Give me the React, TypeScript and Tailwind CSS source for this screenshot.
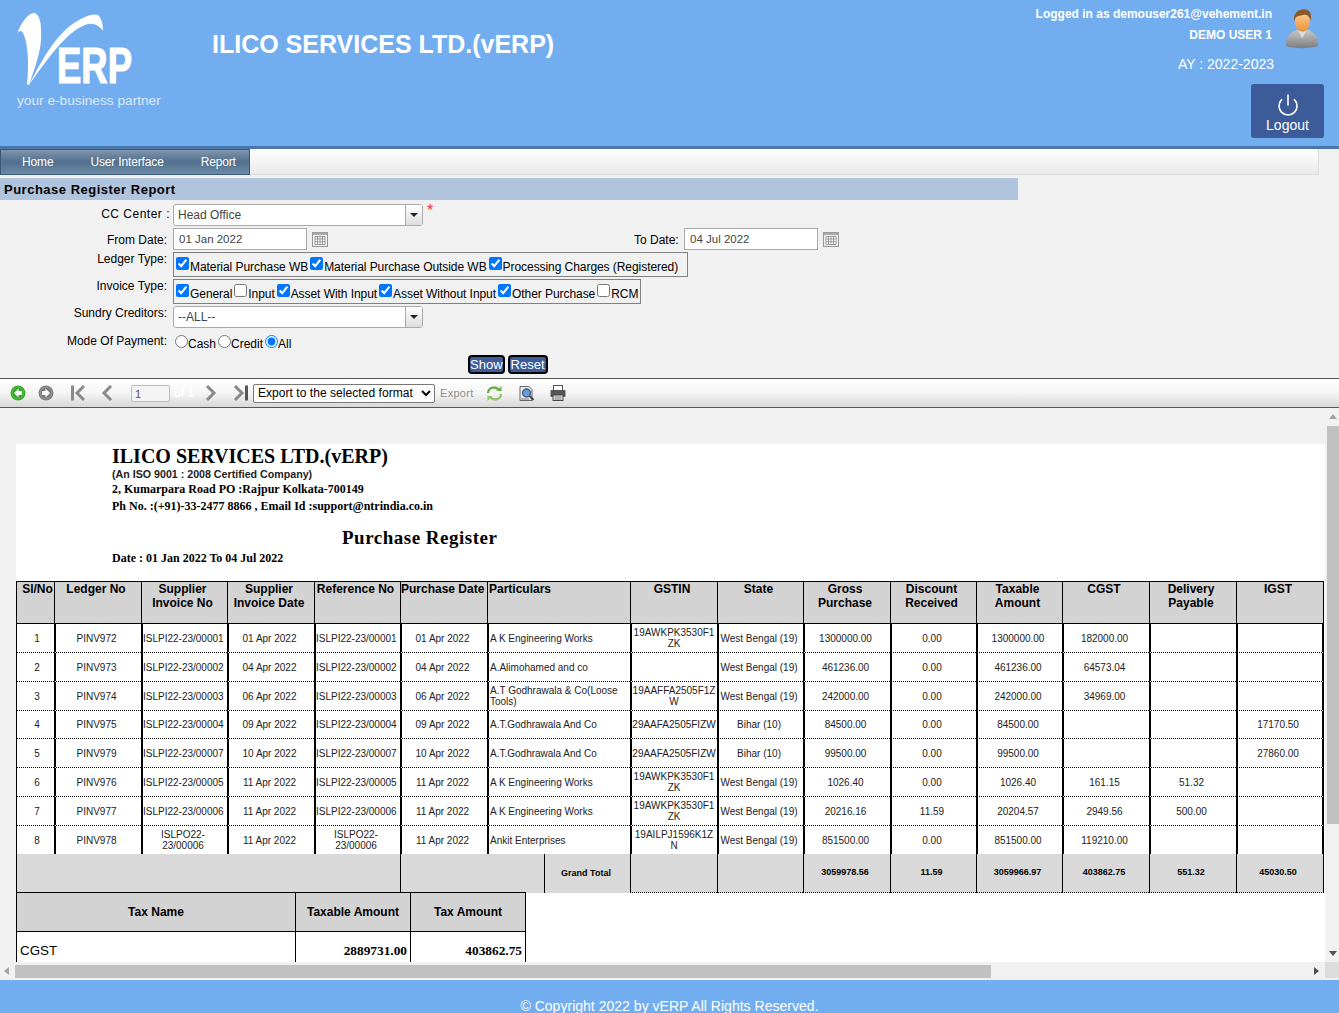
import { Power } from "lucide-react";

const sans = "font-['Liberation_Sans',Arial,sans-serif]";
const serif = "font-['Liberation_Serif','Times_New_Roman',serif]";

const rows = [
  ["1", "PINV972", "ISLPI22-23/00001", "01 Apr 2022", "ISLPI22-23/00001", "01 Apr 2022", "A K Engineering Works", "19AWKPK3530F1ZK", "West Bengal (19)", "1300000.00", "0.00", "1300000.00", "182000.00", "", ""],
  ["2", "PINV973", "ISLPI22-23/00002", "04 Apr 2022", "ISLPI22-23/00002", "04 Apr 2022", "A.Alimohamed and co", "", "West Bengal (19)", "461236.00", "0.00", "461236.00", "64573.04", "", ""],
  ["3", "PINV974", "ISLPI22-23/00003", "06 Apr 2022", "ISLPI22-23/00003", "06 Apr 2022", "A.T Godhrawala & Co(Loose Tools)", "19AAFFA2505F1ZW", "West Bengal (19)", "242000.00", "0.00", "242000.00", "34969.00", "", ""],
  ["4", "PINV975", "ISLPI22-23/00004", "09 Apr 2022", "ISLPI22-23/00004", "09 Apr 2022", "A.T.Godhrawala And Co", "29AAFA2505FIZW", "Bihar (10)", "84500.00", "0.00", "84500.00", "", "", "17170.50"],
  ["5", "PINV979", "ISLPI22-23/00007", "10 Apr 2022", "ISLPI22-23/00007", "10 Apr 2022", "A.T.Godhrawala And Co", "29AAFA2505FIZW", "Bihar (10)", "99500.00", "0.00", "99500.00", "", "", "27860.00"],
  ["6", "PINV976", "ISLPI22-23/00005", "11 Apr 2022", "ISLPI22-23/00005", "11 Apr 2022", "A K Engineering Works", "19AWKPK3530F1ZK", "West Bengal (19)", "1026.40", "0.00", "1026.40", "161.15", "51.32", ""],
  ["7", "PINV977", "ISLPI22-23/00006", "11 Apr 2022", "ISLPI22-23/00006", "11 Apr 2022", "A K Engineering Works", "19AWKPK3530F1ZK", "West Bengal (19)", "20216.16", "11.59", "20204.57", "2949.56", "500.00", ""],
  ["8", "PINV978", "ISLPO22-23/00006", "11 Apr 2022", "ISLPO22-23/00006", "11 Apr 2022", "Ankit Enterprises", "19AILPJ1596K1ZN", "West Bengal (19)", "851500.00", "0.00", "851500.00", "119210.00", "", ""],
];

const rowHeights = [29, 29, 29, 28, 29, 29, 29, 28];

const headers = [
  "Sl/No",
  "Ledger No",
  "Supplier Invoice No",
  "Supplier Invoice Date",
  "Reference No",
  "Purchase Date",
  "Particulars",
  "GSTIN",
  "State",
  "Gross Purchase",
  "Discount Received",
  "Taxable Amount",
  "CGST",
  "Delivery Payable",
  "IGST",
];

const colWidths = [38, 87, 86, 87, 86, 87, 57, 86, 87, 86, 87, 86, 86, 87, 87, 88];

const totals = ["3059978.56", "11.59", "3059966.97", "403862.75", "551.32", "45030.50"];

const Label = ({ children, className = "" }: { children: React.ReactNode; className?: string }) => (
  <span className={`w-[167px] shrink-0 text-right text-[12px] leading-[14px] text-black ${className}`}>{children}</span>
);

const ComboBox = ({ value }: { value: string }) => (
  <div className="flex h-[22px] w-[250px] items-stretch rounded-[3px] border border-[#aaaaaa] bg-white">
    <span className="flex-1 pl-1 text-[12px] leading-[20px] text-[#444444]">{value}</span>
    <span className="flex w-[17px] items-center justify-center border-l border-[#aaaaaa] bg-gradient-to-b from-white to-[#dddddd]">
      <span className="h-0 w-0 border-x-[4px] border-t-[4px] border-x-transparent border-t-[#222222]" />
    </span>
  </div>
);

const CalendarIcon = () => (
  <svg width="16" height="15" viewBox="0 0 16 15" className="ml-[5px]">
    <rect x="0.5" y="0.5" width="15" height="14" fill="#eeeeee" stroke="#999999" />
    <rect x="1" y="1" width="14" height="2" fill="#aaaaaa" />
    <path d="M3 4.5h10v8H3zM3 7h10M3 9.7h10M5.5 4.5v8M8 4.5v8M10.5 4.5v8" fill="#ffffff" stroke="#888888" strokeWidth="0.8" />
  </svg>
);

const DateBox = ({ value }: { value: string }) => (
  <span className="h-[22px] w-[134px] border border-[#aaaaaa] bg-white pl-[5px] text-[11.5px] leading-[21px] text-[#444444]">
    {value}
  </span>
);

const Check = ({ label, checked = true }: { label: string; checked?: boolean }) => (
  <label className="inline-flex items-center text-[12px] leading-[14px] text-black">
    <input type="checkbox" defaultChecked={checked} className="-mt-[5px] h-[13px] w-[13px]" />
    <span className="ml-[1px] pt-px tracking-[-0.06px]">{label}</span>
  </label>
);

const Radio = ({ label, checked = false }: { label: string; checked?: boolean }) => (
  <label className="inline-flex items-center text-[12px] leading-[14px] text-black">
    <input type="radio" name="mode" defaultChecked={checked} className="-mt-[4px] h-[13px] w-[13px]" />
    <span className="pt-px">{label}</span>
  </label>
);

const Logo = () => (
  <div className="relative h-[110px] w-[170px]">
    <svg width="170" height="90" viewBox="0 0 170 90" className="absolute left-0 top-0">
      <path
        d="M17 34 C21 23 28 13 34 13 C40 14 42 24 41 40 C40 55 34 70 29 85 C28 85 27 84 27 84 C29 65 28 45 24 35 C22 30 19 30 17 34 Z"
        fill="#ffffff"
      />
      <path
        d="M29 85 C42 60 55 36 74 23 C84 16 94 13 98 15 C102 19 103 25 103 31 C99 25 92 22 85 25 C65 33 47 60 29 85 Z"
        fill="#ffffff"
      />
      <text x="57" y="83" fill="#ffffff" stroke="#ffffff" strokeWidth="1.2" fontFamily="'Liberation Sans', Arial, sans-serif" fontWeight="700" fontSize="50" textLength="75" lengthAdjust="spacingAndGlyphs">
        ERP
      </text>
    </svg>
    <span className={`absolute left-[17px] top-[91px] whitespace-nowrap text-[13.7px] text-[#dbe9fb] ${sans}`}>your e-business partner</span>
  </div>
);

const UserAvatar = () => (
  <svg width="34" height="40" viewBox="0 0 36 42">
    <defs>
      <linearGradient id="suit" x1="0" y1="0" x2="0" y2="1">
        <stop offset="0" stopColor="#c9c9c9" />
        <stop offset="1" stopColor="#7d7d7d" />
      </linearGradient>
      <linearGradient id="skin" x1="0" y1="0" x2="0" y2="1">
        <stop offset="0" stopColor="#ffd39a" />
        <stop offset="1" stopColor="#ea9038" />
      </linearGradient>
    </defs>
    <path d="M1 39 C1 28 7 24 13 22 L24 22 C31 24 35 29 35 39 C25 42 10 42 1 39Z" fill="url(#suit)" />
    <path d="M14 22 L18 31 L23 22Z" fill="#dddddd" />
    <ellipse cx="18.5" cy="13" rx="8" ry="11" fill="url(#skin)" />
    <path d="M10 13 C8 4 14 0 20 0 C26 0 29 5 27 12 C26 8 24 6 21 6 C17 7 13 7 11 9Z" fill="#8a5a2b" />
  </svg>
);

const NavArrow = ({ color, dir }: { color: string; dir: "left" | "right" }) => (
  <svg width="16" height="16" viewBox="0 0 16 16">
    <circle cx="8" cy="8" r="7.5" fill={color} />
    <circle cx="8" cy="8" r="5.8" fill="none" stroke="#ffffff" strokeOpacity="0.2" />
    <path d={dir === "left" ? "M8.5 3.5 4 8l4.5 4.5V10H12V6H8.5z" : "M7.5 3.5 12 8l-4.5 4.5V10H4V6h3.5z"} fill="#ffffff" />
  </svg>
);

const Chevron = ({ dir, bar = false }: { dir: "left" | "right"; bar?: boolean }) => (
  <svg width="16" height="16" viewBox="0 0 16 16">
    {dir === "left" ? (
      <>
        {bar && <rect x="0" y="0.5" width="3" height="15" fill="#8a8a8a" />}
        <path d="M13 1 6 8l7 7" fill="none" stroke="#8a8a8a" strokeWidth="3" />
      </>
    ) : (
      <>
        <path d="M3 1l7 7-7 7" fill="none" stroke="#8a8a8a" strokeWidth="3" />
        {bar && <rect x="13" y="0.5" width="3" height="15" fill="#555555" />}
      </>
    )}
  </svg>
);

const RefreshIcon = () => (
  <svg width="17" height="17" viewBox="0 0 17 17" fill="none">
    <path d="M2 8C2 4.5 5 2.5 8 2.5c2 0 3.5.8 4.5 2" stroke="#6fb04a" strokeWidth="2.4" />
    <path d="M10.5 6h5V1z" fill="#6fb04a" />
    <path d="M15 9c0 3.5-3 5.5-6 5.5-2 0-3.5-.8-4.5-2" stroke="#8fc46a" strokeWidth="2.4" />
    <path d="M6.5 11h-5v5z" fill="#8fc46a" />
  </svg>
);

const SearchDocIcon = () => (
  <svg width="17" height="17" viewBox="0 0 17 17" fill="none">
    <path d="M2 1.5h9l3 3v11H2z" fill="#eeeeee" stroke="#666666" />
    <circle cx="8.5" cy="8" r="4" fill="#6d9bd0" stroke="#3d5f8c" strokeWidth="1.4" />
    <path d="M11.5 11l4 4" stroke="#444444" strokeWidth="2" />
    <path d="M3 14h8" stroke="#777777" />
  </svg>
);

const PrinterIcon = () => (
  <svg width="16" height="16" viewBox="0 0 16 16">
    <rect x="3.5" y="0.5" width="9" height="5" fill="#ffffff" stroke="#555555" />
    <rect x="0.5" y="5" width="15" height="7" rx="1" fill="#555555" />
    <rect x="3" y="10" width="10" height="5.5" fill="#e8e8e8" stroke="#444444" />
    <path d="M4.5 12h7M4.5 14h7" stroke="#777777" />
  </svg>
);

const Toolbar = () => (
  <div className="flex h-[30px] items-center border-y border-[#555555] bg-gradient-to-b from-white via-[#f5f5f5] to-[#d8d8d8]">
    <div className="ml-[10px] flex items-center gap-[12px]">
      <NavArrow color="#35a82a" dir="left" />
      <NavArrow color="#7d7d7d" dir="right" />
    </div>
    <div className="ml-[17px]"><Chevron dir="left" bar /></div>
    <div className="ml-[11px]"><Chevron dir="left" /></div>
    <span className="ml-[17px] h-[17px] w-[39px] rounded-[2px] border border-[#bbbbbb] bg-[#f4f4f4] pl-[3px] text-[11px] leading-[16px] text-[#555555]">1</span>
    <span className="ml-[4px] w-[20px] whitespace-nowrap text-[11px] font-bold text-white">of 1</span>
    <div className="ml-[10px]"><Chevron dir="right" /></div>
    <div className="ml-[12px]"><Chevron dir="right" bar /></div>
    <select defaultValue="x" className={`ml-[5px] h-[19px] w-[182px] rounded-[2px] border border-[#767676] bg-white text-[12px] tracking-[0.05px] text-black ${sans}`}>
      <option value="x">Export to the selected format</option>
    </select>
    <span className="ml-[5px] w-[35px] text-[11px] tracking-[0.3px] text-[#8f8f8f]">Export</span>
    <div className="ml-[11px]"><RefreshIcon /></div>
    <div className="ml-[15px]"><SearchDocIcon /></div>
    <div className="ml-[15px]"><PrinterIcon /></div>
  </div>
);

const ReportTable = () => (
  <table className="w-[1308px] table-fixed border-separate border-spacing-0 text-black">
    <colgroup>
      {colWidths.map((width, i) => (
        <col key={i} style={{ width }} />
      ))}
    </colgroup>
    <thead>
      <tr className="h-[43px]">
        {headers.map((h, i) => (
          <th
            key={h}
            colSpan={h === "Particulars" ? 2 : 1}
            className={`border-y border-l border-black bg-[#d3d3d3] align-top text-[12px] font-bold leading-[14px] ${i === 14 ? "border-r" : ""} ${i === 0 ? "pl-[4px]" : ""} ${h === "Particulars" ? "pl-px text-left" : i === 0 ? "text-center" : "pr-[4px] text-center"} ${h === "Reference No" || h === "Purchase Date" ? "whitespace-nowrap" : ""}`}
          >
            {h}
          </th>
        ))}
      </tr>
    </thead>
    <tbody>
      {rows.map((row, r) => (
        <tr key={row[0]} style={{ height: rowHeights[r] }}>
          {row.map((cell, i) => (
            <td
              key={i}
              colSpan={i === 6 ? 2 : 1}
              className={`border-solid border-black p-0 text-[10px] leading-[11px] text-[#222222] ${i === 0 ? "border-l pl-[3px]" : "border-l-2"} ${i === 14 ? "border-r-2" : ""} ${r < 7 ? "border-b border-b-black [border-bottom-style:dotted]" : ""} ${i === 6 ? "pl-px text-left" : i === 7 ? "pr-px text-center break-all" : i === 0 ? "text-center" : "pr-[4px] text-center whitespace-nowrap"}`}
            >
              {(i === 2 || i === 4) && cell.startsWith("ISLPO") ? (
                <>ISLPO22-<br />23/00006</>
              ) : (
                cell
              )}
            </td>
          ))}
        </tr>
      ))}
      <tr className="h-[39px] bg-[#d9d9d9] text-[9px] font-bold">
        <td colSpan={5} className="border-l border-black" />
        <td colSpan={2} className="border-l border-black" />
        <td className="border-l border-black pr-[3px] text-center">Grand Total</td>
        <td className="border-b border-l border-black [border-bottom-style:dotted]" />
        <td className="border-b border-l border-black [border-bottom-style:dotted]" />
        {totals.map((t, i) => (
          <td
            key={t}
            className={`border-b border-l border-black pr-[4px] text-center [border-bottom-style:dotted] ${i === 5 ? "border-r" : ""}`}
          >
            {t}
          </td>
        ))}
      </tr>
    </tbody>
  </table>
);

const TaxTable = () => (
  <table className="-mt-px w-[510px] table-fixed border-separate border-spacing-0 text-black">
    <colgroup>
      <col style={{ width: 279 }} />
      <col style={{ width: 115 }} />
      <col style={{ width: 116 }} />
    </colgroup>
    <thead>
      <tr className="h-[40px] bg-[#d3d3d3] text-[12px] font-bold">
        <th className="border-y border-l border-black font-bold">Tax Name</th>
        <th className="border-y border-l border-black font-bold">Taxable Amount</th>
        <th className="border-y border-x border-black font-bold">Tax Amount</th>
      </tr>
    </thead>
    <tbody>
      <tr className="h-[38px] align-middle">
        <td className="border-l border-black pl-[3px] text-[13.33px]">CGST</td>
        <td className={`border-l border-black pr-[3px] text-right text-[13.33px] font-bold ${serif}`}>2889731.00</td>
        <td className={`border-x border-black pr-[3px] text-right text-[13.33px] font-bold ${serif}`}>403862.75</td>
      </tr>
    </tbody>
  </table>
);

export default function App() {
  return (
    <div className={`h-[1013px] w-[1339px] overflow-hidden bg-[#f1f1f1] ${sans}`}>
      <header className="flex h-[149px] border-b-[3px] border-[#4a77ab] bg-[#72aeef] text-white">
        <div className="w-[212px] shrink-0">
          <Logo />
        </div>
        <h1 className="mt-[29px] flex-1 text-[25px] font-bold leading-[30px]">ILICO SERVICES LTD.(vERP)</h1>
        <div className="flex w-[305px] shrink-0 flex-col items-end pr-[15px]">
          <div className="flex items-start">
            <div className="pt-[4px] text-right text-[12px] font-bold leading-[21px]">
              <div>Logged in as demouser261@vehement.in</div>
              <div>DEMO USER 1</div>
            </div>
            <div className="ml-[13px] mr-[5px] mt-[9px] h-[40px]">
              <UserAvatar />
            </div>
          </div>
          <div className="mr-[50px] mt-[7px] text-[14px] leading-[16px]">AY : 2022-2023</div>
          <button className="mt-[12px] flex h-[54px] w-[73px] flex-col items-center rounded-[3px] bg-[#3c5b98] pt-[9px] text-[14px] leading-[16px] text-white">
            <Power size={24} strokeWidth={1.6} />
            <span>Logout</span>
          </button>
        </div>
      </header>

      <nav className="flex h-[26px] w-[1319px] border-r border-b border-[#dddddd] bg-gradient-to-b from-white to-[#e9e9e9]">
        <div className="flex h-[26px] w-[250px] items-center gap-[37px] border border-[#3c5878] bg-gradient-to-b from-[#8096ac] via-[#506f8e] to-[#6f8aa4] pl-[21px] text-[12px] tracking-[-0.15px] text-white">
          <span>Home</span>
          <span>User Interface</span>
          <span>Report</span>
        </div>
      </nav>

      <div className="mt-[3px] h-[22px] w-[1018px] bg-[#b0c4de] pl-1 text-[13px] font-bold leading-[23px] tracking-[0.5px] text-black">
        Purchase Register Report
      </div>

      <form className="h-[174px]">
        <div className="mt-[4px] flex h-[22px] items-start">
          <span className="w-[170px] shrink-0 text-right text-[12px] leading-[20px] tracking-[0.5px] text-black">CC Center :</span>
          <span className="ml-[3px]"><ComboBox value="Head Office" /></span>
          <span className="ml-[4px] text-[16px] leading-[14px] text-[#ee3333]">*</span>
        </div>
        <div className="mt-[2px] flex h-[22px] items-center">
          <Label className="pt-[2px]">From Date:</Label>
          <span className="ml-[6px] flex items-center"><DateBox value="01 Jan 2022" /><CalendarIcon /></span>
          <span className="ml-[306px] w-[44px] whitespace-nowrap pt-[2px] text-[12px] text-black">To Date:</span>
          <span className="ml-[6px] flex items-center"><DateBox value="04 Jul 2022" /><CalendarIcon /></span>
        </div>
        <div className="mt-[2px] flex h-[25px] items-start">
          <Label>Ledger Type:</Label>
          <div className="ml-[6px] flex h-[25px] items-center gap-[2px] border border-[#808080] px-[2px] pt-[3px]">
            <Check label="Material Purchase WB" />
            <Check label="Material Purchase Outside WB" />
            <Check label="Processing Charges (Registered)" />
            <span className="w-[5px]" />
          </div>
        </div>
        <div className="mt-[2px] flex h-[25px] items-start">
          <Label>Invoice Type:</Label>
          <div className="ml-[6px] flex h-[25px] items-center gap-[2px] border border-[#808080] px-[2px] pt-[3px]">
            <Check label="General" />
            <Check label="Input" checked={false} />
            <Check label="Asset With Input" />
            <Check label="Asset Without Input" />
            <Check label="Other Purchase" />
            <Check label="RCM" checked={false} />
          </div>
        </div>
        <div className="mt-[2px] flex h-[22px] items-start">
          <Label>Sundry Creditors:</Label>
          <span className="ml-[6px]"><ComboBox value="--ALL--" /></span>
        </div>
        <div className="mt-[6px] flex h-[16px] items-start">
          <Label>Mode Of Payment:</Label>
          <span className="ml-[8px] mt-[2px] flex gap-[2px]">
            <Radio label="Cash" />
            <Radio label="Credit" />
            <Radio label="All" checked />
          </span>
        </div>
        <div className="mt-[5px] flex justify-start gap-[3px] pl-[468px]">
          <span className="rounded-[4px] border-2 border-black bg-[#3c5b98] text-[13px] leading-[15px] text-white">Show</span>
          <span className="rounded-[4px] border-2 border-black bg-[#3c5b98] px-[1px] text-[13px] leading-[15px] text-white">Reset</span>
        </div>
      </form>

      <Toolbar />

      <div className="flex h-[554px]">
        <div className="h-full w-[1325px] overflow-hidden pl-4 pt-[36px]">
          <div className="w-[1309px] bg-white">
            <div className="h-[137px] pl-[96px] text-black">
              <div className={`pt-[1px] text-[20px] font-bold leading-[23px] ${serif}`}>ILICO SERVICES LTD.(vERP)</div>
              <div className="text-[10.67px] font-bold leading-[13px] text-[#222222]">(An ISO 9001 : 2008 Certified Company)</div>
              <div className={`text-[12px] font-bold leading-[17px] ${serif}`}>2, Kumarpara Road PO :Rajpur Kolkata-700149</div>
              <div className={`text-[12px] font-bold leading-[17px] ${serif}`}>Ph No. :(+91)-33-2477 8866 , Email Id :support@ntrindia.co.in</div>
              <div className={`mt-[12px] pl-[230px] text-[19px] font-bold leading-[22px] tracking-[0.5px] ${serif}`}>Purchase Register</div>
              <div className={`mt-[2px] text-[12px] font-bold leading-[14px] ${serif}`}>Date : 01 Jan 2022 To 04 Jul 2022</div>
            </div>
            <ReportTable />
            <TaxTable />
          </div>
        </div>
        <div className="flex h-full w-[14px] flex-col items-end bg-[#f1f1f1]">
          <span className="mr-[2px] mt-[6px] h-0 w-0 border-x-[4px] border-b-[5px] border-x-transparent border-b-[#a3a3a3]" />
          <span className="mt-[7px] h-[398px] w-[12px] bg-[#c1c1c1]" />
          <span className="mb-[6px] mr-[2px] mt-auto h-0 w-0 border-x-[4px] border-t-[5px] border-x-transparent border-t-[#505050]" />
        </div>
      </div>

      <div className="flex h-[18px] items-center bg-[#f1f1f1]">
        <span className="ml-[4px] h-0 w-0 border-y-[4px] border-r-[5px] border-y-transparent border-r-[#a3a3a3]" />
        <span className="ml-[6px] h-[13px] w-[976px] bg-[#c1c1c1]" />
        <span className="ml-[323px] h-0 w-0 border-y-[4px] border-l-[5px] border-y-transparent border-l-[#505050]" />
        <span className="mb-[2px] ml-auto h-[16px] w-[14px] bg-[#dcdcdc]" />
      </div>

      <footer className="h-[33px] bg-[#72aeef] pt-[20px] text-center text-[14px] leading-[13px] tracking-[0.02px] text-white">
        © Copyright 2022 by vERP All Rights Reserved.
      </footer>
    </div>
  );
}
